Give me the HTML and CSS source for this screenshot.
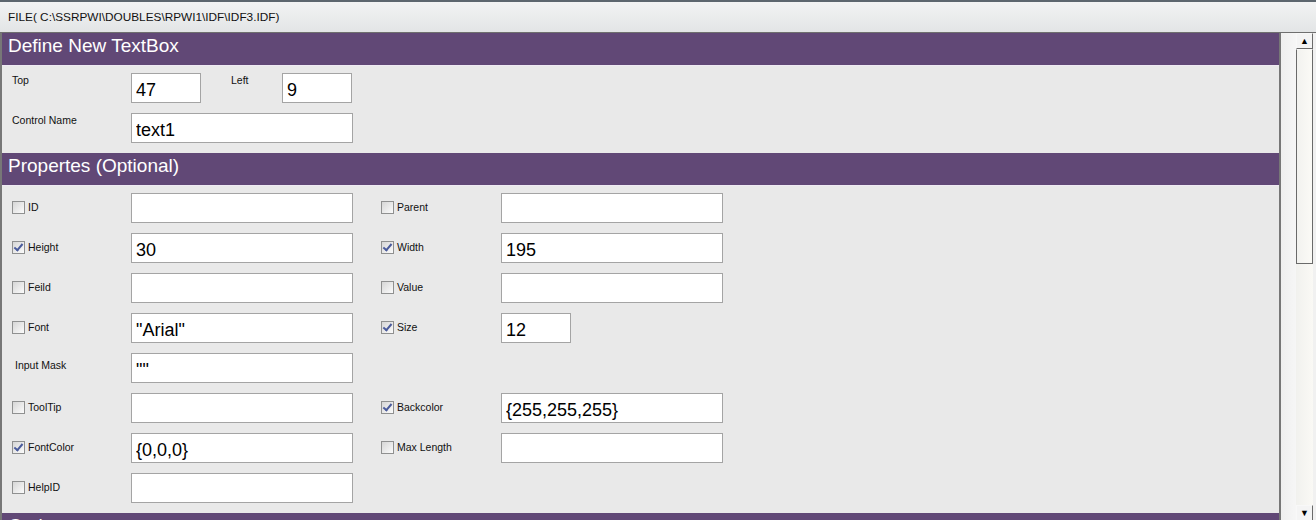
FILE: index.html
```html
<!DOCTYPE html>
<html lang="en">
<head>
    <meta charset="UTF-8">
    <title>Define New TextBox</title>
    <link rel="stylesheet" href="styles.css">
</head>
<body>
    <div class="titlebar">FILE( C:\SSRPWI\DOUBLES\RPWI1\IDF\IDF3.IDF)</div>
    <div class="frame">
        <div class="panel">
            <div class="section-head">Define New TextBox</div>
            <div class="section-body top-body">
                <div class="row">
                    <span class="plain-label">Top</span>
                    <input class="box short" type="text" value="47">
                    <span class="plain-label left-label">Left</span>
                    <input class="box short" type="text" value="9">
                </div>
                <div class="row">
                    <span class="plain-label">Control Name</span>
                    <input class="box" type="text" value="text1">
                </div>
            </div>

            <div class="section-head">Propertes (Optional)</div>
            <div class="section-body props">
                <div class="row">
                    <label class="check"><span class="cb"></span>ID</label>
                    <input class="box" type="text" value="">
                    <label class="check col2"><span class="cb"></span>Parent</label>
                    <input class="box" type="text" value="">
                </div>
                <div class="row">
                    <label class="check"><span class="cb on"></span>Height</label>
                    <input class="box" type="text" value="30">
                    <label class="check col2"><span class="cb on"></span>Width</label>
                    <input class="box" type="text" value="195">
                </div>
                <div class="row">
                    <label class="check"><span class="cb"></span>Feild</label>
                    <input class="box" type="text" value="">
                    <label class="check col2"><span class="cb"></span>Value</label>
                    <input class="box" type="text" value="">
                </div>
                <div class="row">
                    <label class="check"><span class="cb"></span>Font</label>
                    <input class="box" type="text" value="&quot;Arial&quot;">
                    <label class="check col2"><span class="cb on"></span>Size</label>
                    <input class="box short" type="text" value="12">
                </div>
                <div class="row">
                    <span class="check mask">Input Mask</span>
                    <input class="box" type="text" value="&quot;&quot;">
                </div>
                <div class="row">
                    <label class="check"><span class="cb"></span>ToolTip</label>
                    <input class="box" type="text" value="">
                    <label class="check col2"><span class="cb on"></span>Backcolor</label>
                    <input class="box" type="text" value="{255,255,255}">
                </div>
                <div class="row">
                    <label class="check"><span class="cb on"></span>FontColor</label>
                    <input class="box" type="text" value="{0,0,0}">
                    <label class="check col2"><span class="cb"></span>Max Length</label>
                    <input class="box" type="text" value="">
                </div>
                <div class="row">
                    <label class="check"><span class="cb"></span>HelpID</label>
                    <input class="box" type="text" value="">
                </div>
            </div>

            <div class="section-head">Options</div>
        </div>
        <div class="scrollbar">
            <div class="sb-gutter"></div>
            <div class="sb-lane">
                <div class="sb-btn">&#9650;</div>
                <div class="sb-thumb"></div>
                <div class="sb-track"></div>
                <div class="sb-btn">&#9660;</div>
            </div>
        </div>
    </div>
</body>
</html>
```

FILE: styles.css
```css
html, body {
    margin: 0;
    height: 520px;
    overflow: hidden;
}

body {
    font-family: 'Liberation Sans', Arial, sans-serif;
    background-color: #e9e9e9;
    color: #111;
}

.titlebar {
    height: 30px;
    line-height: 30px;
    border-top: 2px solid #5c666e;
    padding-left: 8px;
    font-size: 11.8px;
    background: linear-gradient(#f2f3f3, #e3e5e6);
}

.frame {
    display: flex;
    height: 488px;
    border-top: 1px solid #6f6f6f;
}

.panel {
    width: 1277px;
    border-left: 2px solid #777;
    border-right: 2px solid #777;
    overflow: hidden;
    background-color: #e9e9e9;
}

.section-head {
    height: 32px;
    line-height: 26px;
    padding-left: 6px;
    font-size: 19px;
    color: #fff;
    background-color: #614876;
    border-bottom: 1px solid #efeaf3;
}

.section-body {
    padding-top: 7px;
}

.row {
    display: flex;
    align-items: flex-start;
    height: 40px;
}

.plain-label {
    width: 129px;
    padding-left: 10px;
    padding-top: 1px;
    font-size: 10.5px;
    box-sizing: border-box;
}

.left-label {
    width: 51px;
    padding-left: 30px;
    box-sizing: content-box;
}

.box {
    width: 222px;
    height: 30px;
    box-sizing: border-box;
    border: 1px solid #a4a4a4;
    background: #fff;
    padding: 4px 0 0 4px;
    margin: 0;
    font-family: 'Liberation Sans', Arial, sans-serif;
    font-size: 18px;
    color: #000;
    outline: none;
}

.box.short {
    width: 70px;
}

.check {
    display: flex;
    align-items: center;
    width: 129px;
    height: 28px;
    padding-left: 10px;
    box-sizing: border-box;
    font-size: 10.5px;
}

.check.col2 {
    width: 148px;
    padding-left: 28px;
}

.check.mask {
    padding-left: 13px;
    height: 24px;
}

.cb {
    width: 11px;
    height: 11px;
    border: 1px solid #8f9090;
    background: linear-gradient(135deg, #d6d6d6, #fbfbfb);
    margin-right: 3px;
    position: relative;
}

.cb.on::after {
    content: "";
    position: absolute;
    left: 3px;
    top: 0px;
    width: 3px;
    height: 7px;
    border-right: 2px solid #4a5b9c;
    border-bottom: 2px solid #4a5b9c;
    transform: rotate(40deg);
}

.scrollbar {
    display: flex;
    width: 35px;
    background-color: #f1f1f1;
}

.sb-gutter {
    width: 15px;
    background: linear-gradient(90deg, #efefef, #f6f6f6);
}

.sb-lane {
    width: 17px;
    display: flex;
    flex-direction: column;
}

.sb-btn {
    height: 16px;
    border: 1px solid #a0a0a0;
    border-color: #f8f8f8 #6a6a6a #6a6a6a #f8f8f8;
    background: #f4f4f4;
    font-size: 9px;
    line-height: 15px;
    text-align: center;
    color: #000;
    box-sizing: border-box;
}

.sb-thumb {
    height: 215px;
    box-sizing: border-box;
    border: 1px solid #6a6a6a;
    border-top-color: #f8f8f8;
    background: linear-gradient(90deg, #f2f2ef, #fbfaf6);
}

.sb-track {
    flex: 1;
    background: linear-gradient(90deg, #f1f1ee, #faf9f5);
}
```
